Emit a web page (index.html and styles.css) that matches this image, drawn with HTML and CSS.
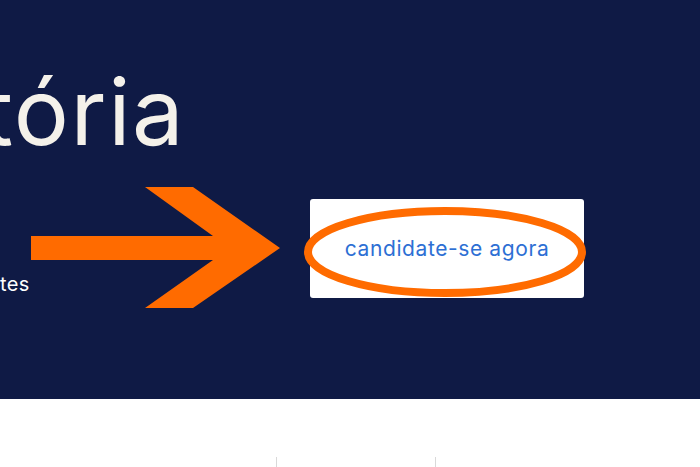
FILE: index.html
```html
<!DOCTYPE html>
<html lang="pt-BR">
<head>
<meta charset="utf-8">
<title>Candidate-se</title>
<link rel="stylesheet" href="styles.css">
</head>
<body>
<section class="hero">
  <h1 class="hero-title">tória</h1>
  <div class="hero-row">
    <div class="hero-copy">
      <p class="hero-text">tes</p>
    </div>
    <a class="cta" href="#">candidate-se agora</a>
  </div>
  <svg class="annotations" width="700" height="399" viewBox="0 0 700 399" aria-hidden="true">
    <polygon fill="#ff6b00" points="31,236 213,236 145,187 193,187 280,248 193,308 145,308 213,260 31,260"/>
    <ellipse cx="445" cy="252" rx="137" ry="41" fill="none" stroke="#ff6b00" stroke-width="8"/>
  </svg>
</section>
<section class="below">
  <div class="cols">
    <div class="col"></div>
    <div class="col col-divided"></div>
    <div class="col col-divided"></div>
  </div>
</section>
</body>
</html>
```
FILE: styles.css
```css
* { box-sizing: border-box; }
html, body { margin: 0; padding: 0; }
body {
  width: 700px;
  height: 467px;
  overflow: hidden;
  background: #ffffff;
  font-family: Inter, "Noto Sans", sans-serif;
}
.hero {
  position: relative;
  height: 399px;
  background: #0f1a45;
  overflow: hidden;
  padding-top: 62px;
}
.hero-title {
  margin: 0 0 0 -17px;
  font-size: 92px;
  line-height: 100px;
  font-weight: 400;
  color: #f4f1ea;
  letter-spacing: 1.6px;
  white-space: nowrap;
}
.hero-row {
  display: flex;
  align-items: flex-end;
  margin-top: 37px;
}
.hero-copy {
  width: 310px;
  flex: none;
}
.hero-text {
  margin: 0 0 2px;
  font-size: 20px;
  line-height: 24px;
  letter-spacing: 0.4px;
  color: #ffffff;
}
.cta {
  display: flex;
  align-items: center;
  justify-content: center;
  width: 274px;
  height: 99px;
  background: #ffffff;
  border-radius: 3px;
  color: #2d6fd4;
  font-size: 21px;
  letter-spacing: 0.6px;
  text-decoration: none;
}
.annotations {
  position: absolute;
  top: 0;
  left: 0;
  pointer-events: none;
}
.below {
  padding-top: 58px;
}
.cols {
  display: grid;
  grid-template-columns: 276px 159px 1fr;
  height: 10px;
}
.col-divided {
  border-left: 1px solid #d9d9d9;
}
```
